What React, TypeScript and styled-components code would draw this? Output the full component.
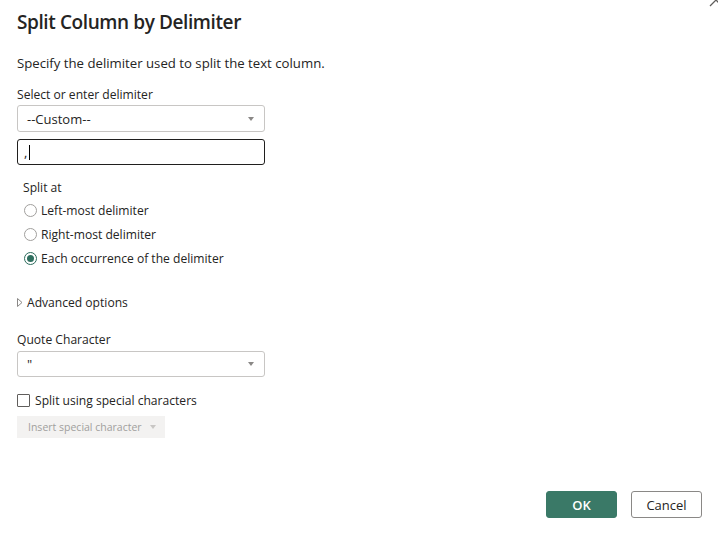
import styled, { createGlobalStyle } from "styled-components";

const GlobalStyle = createGlobalStyle`
	html, body {
		margin: 0;
		padding: 0;
		background: #ffffff;
	}
	* {
		box-sizing: border-box;
	}
`;

const Dialog = styled.div`
	position: relative;
	width: 718px;
	height: 541px;
	padding: 0 16px 23px 17px;
	display: flex;
	flex-direction: column;
	overflow: hidden;
	font-family: "Open Sans", "Noto Sans", sans-serif;
	color: #252423;
`;

const CloseButton = styled.div`
	position: absolute;
	top: -9px;
	right: -6px;
	width: 16px;
	height: 16px;
`;

const Title = styled.h1`
	margin: 6px 0 0;
	font-size: 19px;
	letter-spacing: -0.4px;
	line-height: 32px;
	font-weight: 600;
	color: #252423;
`;

const Description = styled.p`
	margin: 15px 0 0;
	font-size: 13.2px;
	line-height: 20px;
`;

const FieldLabel = styled.div<{ $top: number; $indent?: number }>`
	margin-top: ${(p) => p.$top}px;
	padding: 1px 0 0 ${(p) => p.$indent ?? 0}px;
	font-size: 12.1px;
	line-height: 19px;
`;

const Select = styled.div<{ $top: number; $height: number }>`
	margin-top: ${(p) => p.$top}px;
	width: 248px;
	height: ${(p) => p.$height}px;
	border: 1px solid #c8c6c4;
	border-radius: 3px;
	padding: 0 10px 0 9px;
	display: flex;
	align-items: center;
	justify-content: space-between;
	font-size: 13px;
`;

const Caret = styled.span<{ $color?: string }>`
	width: 0;
	height: 0;
	border-left: 3.5px solid transparent;
	border-right: 3.5px solid transparent;
	border-top: 4px solid ${(p) => p.$color ?? "#8a8886"};
`;

const TextInput = styled.div`
	margin-top: 7px;
	width: 248px;
	height: 26px;
	border: 1px solid #201f1e;
	border-radius: 3px;
	padding: 0 6px;
	display: flex;
	align-items: center;
	font-size: 13px;
`;

const Cursor = styled.span`
	display: inline-block;
	width: 1px;
	height: 15px;
	margin-left: 2px;
	background: #000000;
`;

const RadioGroup = styled.div`
	margin-top: 1px;
	padding-left: 7px;
	display: flex;
	flex-direction: column;
`;

const RadioRow = styled.label`
	height: 24px;
	display: flex;
	align-items: center;
	gap: 4px;
	font-size: 12.1px;
`;

const RadioCircle = styled.span<{ $checked?: boolean }>`
	width: 13px;
	height: 13px;
	border-radius: 50%;
	border: 1px solid ${(p) => (p.$checked ? "#2c6b5c" : "#a19f9d")};
	display: flex;
	align-items: center;
	justify-content: center;
	flex-shrink: 0;

	&::after {
		content: "";
		width: 7px;
		height: 7px;
		border-radius: 50%;
		background: ${(p) => (p.$checked ? "#2f6f5f" : "transparent")};
	}
`;

const Expander = styled.div`
	margin-top: 22px;
	height: 20px;
	display: flex;
	align-items: center;
	gap: 4px;
	font-size: 12.1px;
`;

const CheckRow = styled.label`
	margin-top: 13px;
	height: 20px;
	display: flex;
	align-items: center;
	gap: 5px;
	font-size: 12.1px;
`;

const CheckBox = styled.span`
	width: 13px;
	height: 13px;
	border: 1px solid #605e5c;
	border-radius: 1px;
`;

const DisabledButton = styled.div`
	margin-top: 6px;
	width: 148px;
	height: 22px;
	background: #f3f2f1;
	color: #a19f9d;
	font-size: 10.5px;
	display: flex;
	align-items: center;
	gap: 8px;
	padding-left: 11px;
`;

const Footer = styled.div`
	margin-top: auto;
	display: flex;
	justify-content: flex-end;
	gap: 14px;
`;

const Button = styled.button<{ $primary?: boolean }>`
	width: 71px;
	height: 27px;
	border-radius: 3px;
	font-family: inherit;
	font-size: 13px;
	font-weight: ${(p) => (p.$primary ? 600 : 400)};
	background: ${(p) => (p.$primary ? "#3a7967" : "#ffffff")};
	color: ${(p) => (p.$primary ? "#ffffff" : "#252423")};
	border: 1px solid ${(p) => (p.$primary ? "#3a7967" : "#8a8886")};
	padding: 0;
`;

export default function App() {
	return (
		<>
			<GlobalStyle />
			<Dialog>
				<CloseButton>
					<svg width="16" height="16" viewBox="0 0 16 16">
						<path d="M2 2 L14 14 M14 2 L2 14" stroke="#605e5c" strokeWidth="1.3" />
					</svg>
				</CloseButton>
				<Title>Split Column by Delimiter</Title>
				<Description>Specify the delimiter used to split the text column.</Description>
				<FieldLabel $top={11}>Select or enter delimiter</FieldLabel>
				<Select $top={1} $height={27}>
					<span>--Custom--</span>
					<Caret />
				</Select>
				<TextInput>
					<span>,</span>
					<Cursor />
				</TextInput>
				<FieldLabel $top={12} $indent={6}>
					Split at
				</FieldLabel>
				<RadioGroup>
					<RadioRow>
						<RadioCircle />
						Left-most delimiter
					</RadioRow>
					<RadioRow>
						<RadioCircle />
						Right-most delimiter
					</RadioRow>
					<RadioRow>
						<RadioCircle $checked />
						Each occurrence of the delimiter
					</RadioRow>
				</RadioGroup>
				<Expander>
					<svg width="6" height="9" viewBox="0 0 6 9">
						<path d="M0.5 0.5 L5 4.5 L0.5 8.5 Z" fill="none" stroke="#8a8886" strokeWidth="1" />
					</svg>
					Advanced options
				</Expander>
				<FieldLabel $top={17}>Quote Character</FieldLabel>
				<Select $top={2} $height={26}>
					<span>"</span>
					<Caret />
				</Select>
				<CheckRow>
					<CheckBox />
					Split using special characters
				</CheckRow>
				<DisabledButton>
					Insert special character
					<Caret $color="#c8c6c4" />
				</DisabledButton>
				<Footer>
					<Button $primary>OK</Button>
					<Button>Cancel</Button>
				</Footer>
			</Dialog>
		</>
	);
}
